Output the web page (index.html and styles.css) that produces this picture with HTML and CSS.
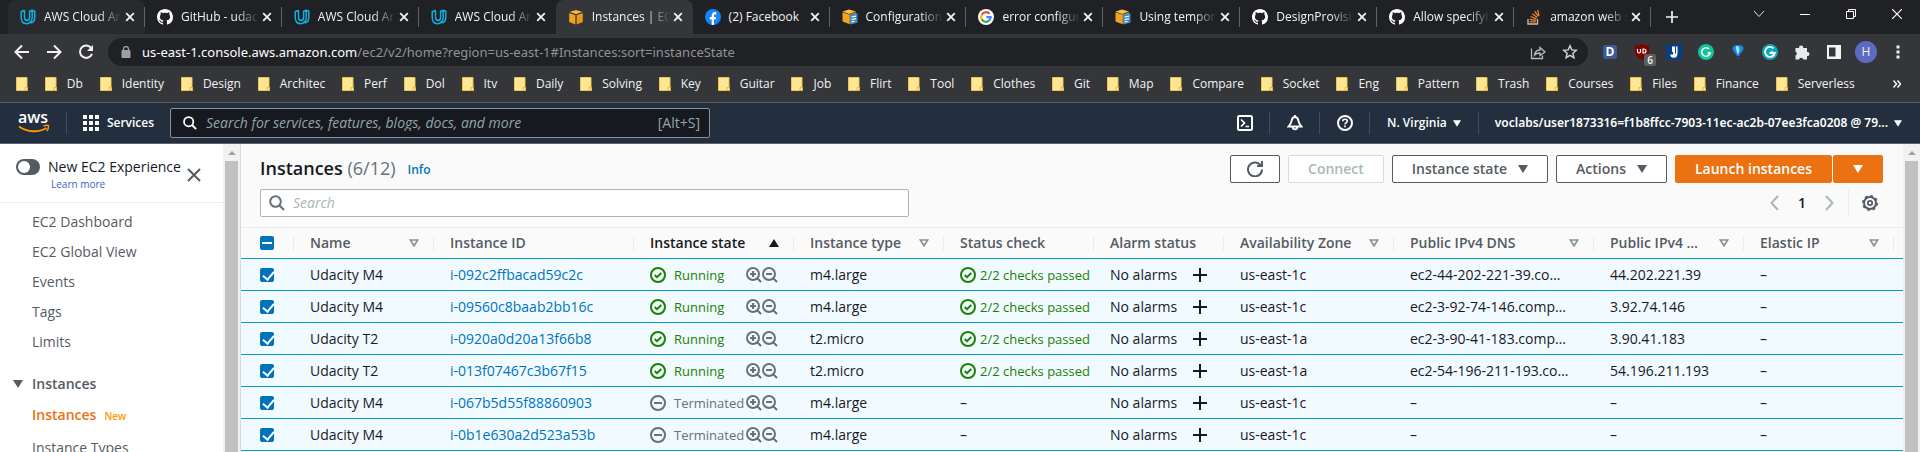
FILE: index.html
```html
<!DOCTYPE html>
<html lang="en">
<head>
<meta charset="utf-8">
<title>Instances | EC2 Management Console</title>
<link rel="stylesheet" href="styles.css">
</head>
<body>
<svg class="sprite" aria-hidden="true">
  <symbol id="udacity" viewBox="0 0 16 16"><path d="M4.500 1.200 1.200 2.700V8c0 4 2 6.700 5.300 6.700 1.700 0 3-.7 4-2M4.500 1.200V8c0 2 .8 3.500 2.600 3.500S9.600 10 9.600 8V2.200l2.600-1 2.600.9V8c0 3-1.400 5.600-4.300 6M12.200 1.400V8c0 2.800-1 4.700-2.600 5.400" fill="none" stroke="#12b0e0" stroke-width="1.500" stroke-linejoin="round"/></symbol>
  <symbol id="github" viewBox="0 0 16 16"><path fill="#fff" d="M8 0C3.580 0 0 3.580 0 8c0 3.540 2.290 6.530 5.470 7.590.4.070.55-.17.55-.38 0-.19-.01-.82-.01-1.490-2.010.37-2.530-.49-2.690-.94-.09-.23-.48-.94-.82-1.130-.28-.15-.68-.52-.01-.53.63-.01 1.080.58 1.230.82.72 1.210 1.870.87 2.330.66.070-.52.28-.87.51-1.070-1.780-.2-3.640-.89-3.640-3.950 0-.87.31-1.590.82-2.150-.08-.2-.36-1.020.08-2.120 0 0 .67-.21 2.200.82.64-.18 1.320-.27 2-.27s1.360.09 2 .27c1.530-1.040 2.200-.82 2.200-.82.44 1.100.16 1.920.08 2.120.51.56.82 1.270.82 2.150 0 3.070-1.870 3.750-3.650 3.950.29.25.54.73.54 1.480 0 1.070-.01 1.930-.01 2.200 0 .21.15.46.55.38A8.010 8.010 0 0 0 16 8c0-4.420-3.580-8-8-8z"/></symbol>
  <symbol id="cube" viewBox="0 0 16 16"><path fill="#f9b52c" d="m8 1 6.500 2L8 5.200 1.500 3z"/><path fill="#f0a31f" d="M1.200 4 7.600 6v9.500L1.200 13z"/><path fill="#e79a1a" d="M14.800 4 8.400 6v9.500l6.400-2.500z"/><path stroke="#35363a" stroke-width=".8" d="M1.200 3.600 8 5.700l6.800-2.100M8 5.700V15.600" fill="none"/></symbol>
  <symbol id="cubedoc" viewBox="0 0 16 16"><path fill="#fbc04a" d="m7 .5 7 2L7 5 .5 2.600z"/><path fill="#f0a31f" d="M.5 3.200 7 5.500V15L.5 12.400z"/><path fill="#d98a14" d="M14 3.200 7 5.500V15l7-2.600z"/><path fill="#3c8bc5" d="m8 5.500 7.500-1.300v9.500L8 15.600z"/><path stroke="#fff" stroke-width="1.200" d="m9.500 8 4.500-.8M9.500 10.500l4.500-.9M9.500 13l3-.7"/></symbol>
  <symbol id="facebook" viewBox="0 0 16 16"><circle cx="8" cy="8" r="8" fill="#1684f8"/><path fill="#fff" d="M6.700 16v-5.500H4.800V8h1.900V6.500c0-2.200 1.200-3.400 3-3.400.7 0 1.400.1 1.600.2v2.100h-1.100c-.9 0-1.200.5-1.200 1.200V8h2.200l-.4 2.500H9V16z"/></symbol>
  <symbol id="google" viewBox="0 0 16 16"><circle cx="8" cy="8" r="8" fill="#fff"/><g fill="none" stroke-width="2.200"><path stroke="#ea4335" d="M11.500 4.700A4.800 4.800 0 0 0 3.800 5.800"/><path stroke="#fbbc05" d="M3.800 5.600a4.800 4.800 0 0 0 0 4.800"/><path stroke="#34a853" d="M3.700 10.300a4.800 4.800 0 0 0 7.400 1.300"/><path stroke="#4285f4" d="M11 11.700a4.800 4.800 0 0 0 1.700-3.600H8.300"/></g></symbol>
  <symbol id="stack" viewBox="0 0 16 16"><path fill="none" stroke="#bcbbbb" stroke-width="1.400" d="M2 10v5h9.500v-5"/><path stroke="#f48024" stroke-width="1.300" d="M3.700 12.800h6.200M3.800 10.300l6.100 1M4.600 7.500l5.700 2.300M6.400 4.800l4.800 3.800M8.800 2.300l3.600 5M11.700.8l1.300 6"/></symbol>
  <symbol id="x" viewBox="0 0 10 10"><path d="m1.200 1.200 7.600 7.600M8.800 1.200 1.200 8.800" stroke="currentColor" stroke-width="1.800"/></symbol>
  <symbol id="folder" viewBox="0 0 12 14"><path d="M.5.500h10.500v9.500l.5 1v2.500H.5z" fill="#ffe694" stroke="#eec64a"/><path d="M9 10.500h2.500v3H9z" fill="#ffe694" stroke="#e5b93c"/></symbol>
  <symbol id="ok" viewBox="0 0 16 16"><circle cx="8" cy="8" r="7" fill="none" stroke="#1d8102" stroke-width="2"/><path d="m4.700 8 2.300 2.200 4.300-4.200" fill="none" stroke="#1d8102" stroke-width="2"/></symbol>
  <symbol id="stop" viewBox="0 0 16 16"><circle cx="8" cy="8" r="7" fill="none" stroke="#687078" stroke-width="2"/><path d="M4 8h8" stroke="#687078" stroke-width="2"/></symbol>
  <symbol id="zin" viewBox="0 0 16 16"><path d="M13 7A6 6 0 1 1 1 7a6 6 0 0 1 12 0zm-1.800 4.200L15 15M4 7h6M7 4v6" fill="none" stroke="#687078" stroke-width="2"/></symbol>
  <symbol id="zout" viewBox="0 0 16 16"><path d="M13 7A6 6 0 1 1 1 7a6 6 0 0 1 12 0zm-1.800 4.200L15 15M4 7h6" fill="none" stroke="#687078" stroke-width="2"/></symbol>
  <symbol id="plus" viewBox="0 0 14 14"><path d="M7 0v14M0 7h14" stroke="currentColor" stroke-width="2"/></symbol>
  <symbol id="lens" viewBox="0 0 16 16"><circle cx="6.500" cy="6.500" r="5.300" fill="none" stroke="currentColor" stroke-width="2"/><path d="m10.300 10.300 4.700 4.700" stroke="currentColor" stroke-width="2.200"/></symbol>
  <symbol id="down" viewBox="0 0 10 8"><path d="M0 0h10L5 8z" fill="currentColor"/></symbol>
  <symbol id="up" viewBox="0 0 10 8"><path d="M0 8h10L5 0z" fill="currentColor"/></symbol>
  <symbol id="sort" viewBox="0 0 10 8"><path d="M1.300 1h7.400L5 6.800z" fill="none" stroke="#879596" stroke-width="1.700"/></symbol>
</svg>

<header class="browser">
  <div class="tabstrip">
    <div class="tabs">
      <div class="tab hover"><svg class="fav"><use href="#udacity"/></svg><span>AWS Cloud Ar</span><button aria-label="Close tab"><svg><use href="#x"/></svg></button></div>
      <div class="tab"><svg class="fav"><use href="#github"/></svg><span>GitHub - udac</span><button aria-label="Close tab"><svg><use href="#x"/></svg></button></div>
      <div class="tab"><svg class="fav"><use href="#udacity"/></svg><span>AWS Cloud Ar</span><button aria-label="Close tab"><svg><use href="#x"/></svg></button></div>
      <div class="tab quiet"><svg class="fav"><use href="#udacity"/></svg><span>AWS Cloud Ar</span><button aria-label="Close tab"><svg><use href="#x"/></svg></button></div>
      <div class="tab active"><svg class="fav"><use href="#cube"/></svg><span>Instances | EC</span><button aria-label="Close tab"><svg><use href="#x"/></svg></button></div>
      <div class="tab full"><svg class="fav"><use href="#facebook"/></svg><span>(2) Facebook</span><button aria-label="Close tab"><svg><use href="#x"/></svg></button></div>
      <div class="tab"><svg class="fav"><use href="#cubedoc"/></svg><span>Configuration</span><button aria-label="Close tab"><svg><use href="#x"/></svg></button></div>
      <div class="tab"><svg class="fav"><use href="#google"/></svg><span>error configur</span><button aria-label="Close tab"><svg><use href="#x"/></svg></button></div>
      <div class="tab"><svg class="fav"><use href="#cubedoc"/></svg><span>Using tempor</span><button aria-label="Close tab"><svg><use href="#x"/></svg></button></div>
      <div class="tab"><svg class="fav"><use href="#github"/></svg><span>DesignProvisi</span><button aria-label="Close tab"><svg><use href="#x"/></svg></button></div>
      <div class="tab"><svg class="fav"><use href="#github"/></svg><span>Allow specifyi</span><button aria-label="Close tab"><svg><use href="#x"/></svg></button></div>
      <div class="tab"><svg class="fav"><use href="#stack"/></svg><span>amazon web s</span><button aria-label="Close tab"><svg><use href="#x"/></svg></button></div>
    </div>
    <button class="newtab" aria-label="New tab"><svg width="12" height="12"><use href="#plus"/></svg></button>
    <div class="winctl">
      <button aria-label="Search tabs"><svg width="12" height="12" viewBox="0 0 12 12"><path d="m1 3 5 5.500L11 3" fill="none" stroke="#ddd"/></svg></button>
      <button aria-label="Minimize"><svg width="10" height="10" viewBox="0 0 10 10"><path d="M0 5.500h10" stroke="#fff"/></svg></button>
      <button aria-label="Restore"><svg width="10" height="10" viewBox="0 0 10 10"><path d="M.5 2.500h7v7h-7zM2.500 2.500v-2h7v7h-2" fill="none" stroke="#fff"/></svg></button>
      <button aria-label="Close"><svg width="10" height="10" viewBox="0 0 10 10"><path d="m0 0 10 10M10 0 0 10" stroke="#fff" stroke-width="1.200"/></svg></button>
    </div>
  </div>

  <div class="toolbar">
    <div class="navbtns">
      <button aria-label="Back"><svg width="16" height="16" viewBox="0 0 16 16"><path d="M15 8H2.500M8 1.500 1.500 8 8 14.500" fill="none" stroke="#f1f1f1" stroke-width="2"/></svg></button>
      <button aria-label="Forward"><svg width="16" height="16" viewBox="0 0 16 16"><path d="M1 8h12.500M8 1.500 14.500 8 8 14.500" fill="none" stroke="#f1f1f1" stroke-width="2"/></svg></button>
      <button aria-label="Reload"><svg width="16" height="16" viewBox="0 0 16 16"><path d="M13.300 4.200A6.200 6.200 0 1 0 14 9.800" fill="none" stroke="#f1f1f1" stroke-width="2"/><path d="M15 1v6H9z" fill="#f1f1f1"/></svg></button>
    </div>
    <div class="omnibox">
      <svg width="10" height="12" viewBox="0 0 10 12"><path d="M1 4.500h8V11.500H1z" fill="#9aa0a6" stroke="#9aa0a6"/><path d="M2.500 5V3a2.500 2.500 0 0 1 5 0v2" fill="none" stroke="#9aa0a6" stroke-width="1.300"/></svg>
      <div class="url">us-east-1.console.aws.amazon.com<span>/ec2/v2/home?region=us-east-1#Instances:sort=instanceState</span></div>
      <button aria-label="Share"><svg width="16" height="16" viewBox="0 0 16 16"><path d="M1.500 4.500V14.500h11v-3M4.500 11c.5-3.500 2.500-5 5.500-5V3.500L15 8l-5 3.500V9c-2.500 0-4.300.6-5.500 2z" fill="none" stroke="#b8bbc0" stroke-width="1.300"/></svg></button>
      <button aria-label="Bookmark"><svg width="16" height="16" viewBox="0 0 16 16"><path d="m8 1.800 1.800 4.100 4.500.4-3.400 3 1 4.400L8 11.400l-3.900 2.300 1-4.400-3.400-3 4.500-.4z" fill="none" stroke="#d0d2d5" stroke-width="1.500"/></svg></button>
    </div>
    <div class="exts">
      <button aria-label="D extension"><span class="ext-d">D</span></button>
      <button aria-label="uBlock" class="ublock"><svg width="16" height="16" viewBox="0 0 16 16"><path d="M8 0c2 1.300 4.500 1.500 7 1.500v6c0 4-3 6.500-7 8.500-4-2-7-4.500-7-8.500v-6C3.500 1.500 6 1.300 8 0z" fill="#800000"/><path d="M3.500 5v2.500a1.500 1.500 0 0 0 3 0V5M9 5v4h1a2 2 0 0 0 0-4z" fill="none" stroke="#fff" stroke-width="1.200"/></svg><span class="count">6</span></button>
      <button aria-label="J extension"><svg width="16" height="16" viewBox="0 0 16 16"><path d="M0 0h16v16H0z" fill="#083f83"/><path d="M6 2.500h5.500V9c0 3.500-1.600 4.800-3.600 4.800-2.400 0-3.700-1.300-3.700-3.300h3V8H6z" fill="#fff"/><path d="M9.500 2.500v7" stroke="#083f83"/></svg></button>
      <button aria-label="Grammarly"><svg width="16" height="16" viewBox="0 0 16 16"><circle cx="8" cy="8" r="8" fill="#15c39a"/><path d="M11 5a4.300 4.300 0 1 0 1.200 4H9.500" fill="none" stroke="#fff" stroke-width="1.500"/></svg></button>
      <button aria-label="Balloon extension"><svg width="14" height="16" viewBox="0 0 14 16"><path d="M7 1c3.500 0 5.500 1.300 5.500 3.500S9 9.500 8.200 12H5.800C5 9.500 1.500 6.700 1.500 4.500S3.500 1 7 1z" fill="#128ee8"/><path d="M5.500 2C6.500 1.500 8.500 2.500 8.500 5s-.9 4-1.600 5.500C6 9 4 3.500 5.500 2z" fill="#a5e1ff"/><path d="M6 13h2v2H6z" fill="#1550a0"/></svg></button>
      <button aria-label="G extension"><svg width="16" height="16" viewBox="0 0 16 16"><circle cx="8" cy="8" r="8" fill="#10a7bb"/><path d="M11.500 4.300a5 5 0 1 0 1.400 4.700H7.500" fill="none" stroke="#fff" stroke-width="1.800"/><path d="m9 6.500 4 2.500-3 1.500" fill="#fff"/></svg></button>
      <button aria-label="Extensions"><svg width="16" height="16" viewBox="0 0 16 16"><path d="M1.500 4h3.700a2 2 0 1 1 3.900 0H13v4a2 2 0 1 1 0 3.900v3.600H9.300a2.200 2.200 0 0 0-4.300 0H1.500v-4a2 2 0 0 0 0-3.800z" fill="#e8eaed"/></svg></button>
      <button aria-label="Side panel"><svg width="14" height="14" viewBox="0 0 14 14"><path d="M0 0h14v14H0zM2 2.500v9h6.500v-9z" fill="#f1f3f4" fill-rule="evenodd"/></svg></button>
      <button aria-label="Profile"><span class="avatar">H</span></button>
      <button aria-label="Menu"><svg width="4" height="14" viewBox="0 0 4 14"><path d="M.5.500h3v3h-3zM.5 5.500h3v3h-3zM.5 10.500h3v3h-3z" fill="#f1f1f1"/></svg></button>
    </div>
  </div>

  <nav class="bookmarks">
    <div class="marks">
      <a href="#" aria-label="Folder"><svg><use href="#folder"/></svg></a>
      <a href="#"><svg><use href="#folder"/></svg>Db</a>
      <a href="#"><svg><use href="#folder"/></svg>Identity</a>
      <a href="#"><svg><use href="#folder"/></svg>Design</a>
      <a href="#"><svg><use href="#folder"/></svg>Architec</a>
      <a href="#"><svg><use href="#folder"/></svg>Perf</a>
      <a href="#"><svg><use href="#folder"/></svg>Dol</a>
      <a href="#"><svg><use href="#folder"/></svg>Itv</a>
      <a href="#"><svg><use href="#folder"/></svg>Daily</a>
      <a href="#"><svg><use href="#folder"/></svg>Solving</a>
      <a href="#"><svg><use href="#folder"/></svg>Key</a>
      <a href="#"><svg><use href="#folder"/></svg>Guitar</a>
      <a href="#"><svg><use href="#folder"/></svg>Job</a>
      <a href="#"><svg><use href="#folder"/></svg>Flirt</a>
      <a href="#"><svg><use href="#folder"/></svg>Tool</a>
      <a href="#"><svg><use href="#folder"/></svg>Clothes</a>
      <a href="#"><svg><use href="#folder"/></svg>Git</a>
      <a href="#"><svg><use href="#folder"/></svg>Map</a>
      <a href="#"><svg><use href="#folder"/></svg>Compare</a>
      <a href="#"><svg><use href="#folder"/></svg>Socket</a>
      <a href="#"><svg><use href="#folder"/></svg>Eng</a>
      <a href="#"><svg><use href="#folder"/></svg>Pattern</a>
      <a href="#"><svg><use href="#folder"/></svg>Trash</a>
      <a href="#"><svg><use href="#folder"/></svg>Courses</a>
      <a href="#"><svg><use href="#folder"/></svg>Files</a>
      <a href="#"><svg><use href="#folder"/></svg>Finance</a>
      <a href="#"><svg><use href="#folder"/></svg>Serverless</a>
    </div>
    <button aria-label="More bookmarks"><svg width="8" height="8" viewBox="0 0 8 8"><path d="m.5.500 3 3.500-3 3.500M4.500.500l3 3.500-3 3.500" fill="none" stroke="#fff" stroke-width="1.500"/></svg></button>
  </nav>
</header>

<header class="awsnav">
  <a class="logo" href="#" aria-label="AWS home"><svg width="32" height="22" viewBox="0 0 32 22"><text x="0" y="11" class="logotext">aws</text><path d="M1 14.500c8.500 6 19.500 6.300 27.500 1.500" fill="none" stroke="#f90" stroke-width="2"/><path d="M25.500 14c2-.8 4-.9 5-.4.300 1.700-.4 3.800-1.800 5.400" fill="none" stroke="#f90" stroke-width="1.400"/></svg></a>
  <button class="services"><svg width="16" height="16" viewBox="0 0 16 16"><path d="M0 0h4v4H0zM6 0h4v4H6zM12 0h4v4h-4zM0 6h4v4H0zM6 6h4v4H6zM12 6h4v4h-4zM0 12h4v4H0zM6 12h4v4H6zM12 12h4v4h-4z" fill="#fff"/></svg>Services</button>
  <label class="navsearch"><svg width="14" height="14"><use href="#lens"/></svg><input type="text" aria-label="Search services" placeholder="Search for services, features, blogs, docs, and more"><span>[Alt+S]</span></label>
  <div class="navright">
    <button aria-label="CloudShell"><svg width="16" height="16" viewBox="0 0 16 16"><rect x="1" y="1" width="14" height="14" rx="1.500" fill="none" stroke="#fff" stroke-width="2"/><path d="m4 4.500 3.500 3.500L4 11.500M8.500 11.500H12" fill="none" stroke="#fff" stroke-width="1.700"/></svg></button>
    <button aria-label="Notifications"><svg width="16" height="16" viewBox="0 0 16 16"><path d="M8 2C6 2 5 3.500 4.700 5.500 4.300 8 3.500 9.200 1.500 11.500h13C12.500 9.200 11.700 8 11.300 5.500 11 3.500 10 2 8 2zM8 0v2M5.700 12a2.300 2.300 0 0 0 4.600 0" fill="none" stroke="#fff" stroke-width="1.800"/></svg></button>
    <button aria-label="Help"><svg width="16" height="16" viewBox="0 0 16 16"><circle cx="8" cy="8" r="7" fill="none" stroke="#fff" stroke-width="2"/><path d="M5.700 6.300C5.700 4.900 6.700 4.200 8 4.200s2.300.8 2.300 2C10.300 7.600 8 7.700 8 9.500M8 10.500v1.800" fill="none" stroke="#fff" stroke-width="1.600"/></svg></button>
    <button class="region">N. Virginia<svg width="8" height="7"><use href="#down"/></svg></button>
    <button class="user">voclabs/user1873316=f1b8ffcc-7903-11ec-ac2b-07ee3fca0208 @ 79...<svg width="8" height="7"><use href="#down"/></svg></button>
  </div>
</header>

<div class="app">
  <aside class="side">
    <div class="sidebody">
      <div class="exp">
        <input type="checkbox" id="newexp" class="switch">
        <div class="exptext"><label for="newexp">New EC2 Experience</label><a href="#">Learn more</a></div>
        <button aria-label="Close panel"><svg width="14" height="14" viewBox="0 0 14 14"><path d="m1 1 12 12M13 1 1 13" stroke="#545b64" stroke-width="2"/></svg></button>
      </div>
      <nav class="links">
        <a href="#">EC2 Dashboard</a>
        <a href="#">EC2 Global View</a>
        <a href="#">Events</a>
        <a href="#">Tags</a>
        <a href="#">Limits</a>
      </nav>
      <button class="group"><svg width="10" height="8"><use href="#down"/></svg>Instances</button>
      <nav class="links sub">
        <a href="#" class="current">Instances<small>New</small></a>
        <a href="#">Instance Types</a>
      </nav>
    </div>
    <div class="scroll"><svg width="8" height="4" viewBox="0 0 10 8" preserveAspectRatio="none"><path d="M0 8h10L5 0z" fill="#a0a0a0"/></svg><div class="thumb"></div></div>
  </aside>

  <main>
    <div class="head">
      <h1>Instances <span>(6/12)</span></h1><a class="info" href="#">Info</a>
      <div class="actions">
        <button class="btn refresh" aria-label="Refresh"><svg width="16" height="16" viewBox="0 0 16 16"><path d="M13.800 4.500A7 7 0 1 0 15 8.500" fill="none" stroke="#545b64" stroke-width="2"/><path d="M15 0v5H10" fill="none" stroke="#545b64" stroke-width="2"/></svg></button>
        <button class="btn" disabled>Connect</button>
        <button class="btn">Instance state<svg width="10" height="8"><use href="#down"/></svg></button>
        <button class="btn">Actions<svg width="10" height="8"><use href="#down"/></svg></button>
        <div class="split"><button class="btn primary">Launch instances</button><button class="btn primary arrow" aria-label="More launch options"><svg width="10" height="8"><use href="#down"/></svg></button></div>
      </div>
    </div>
    <div class="filter">
      <label class="find"><svg width="16" height="16"><use href="#lens"/></svg><input type="text" aria-label="Search instances" placeholder="Search"></label>
      <div class="pager">
        <button aria-label="Previous page"><svg width="9" height="16" viewBox="0 0 9 16"><path d="M8 1 1.500 8 8 15" fill="none" stroke="#aab7b8" stroke-width="2"/></svg></button>
        <button class="page">1</button>
        <button aria-label="Next page"><svg width="9" height="16" viewBox="0 0 9 16"><path d="M1 1l6.500 7L1 15" fill="none" stroke="#aab7b8" stroke-width="2"/></svg></button>
        <button class="gear" aria-label="Preferences"><svg width="16" height="16" viewBox="0 0 16 16"><circle cx="8" cy="8" r="6" fill="none" stroke="#545b64" stroke-width="2"/><circle cx="8" cy="8" r="7.200" fill="none" stroke="#545b64" stroke-width="1.600" stroke-dasharray="2.830 2.830"/><circle cx="8" cy="8" r="2.200" fill="none" stroke="#545b64" stroke-width="1.700"/></svg></button>
      </div>
    </div>
    <table>
      <colgroup><col class="c-check"><col class="c-140"><col class="c-200"><col class="c-160"><col class="c-150"><col class="c-150"><col class="c-130"><col class="c-170"><col class="c-200"><col class="c-150"><col class="c-150"><col></colgroup>
      <thead><tr>
        <th><input type="checkbox" class="box mixed" aria-label="Select all"></th>
        <th><div>Name<svg width="10" height="8"><use href="#sort"/></svg></div></th>
        <th><div>Instance ID</div></th>
        <th class="sorted"><div>Instance state<svg width="10" height="8"><use href="#up"/></svg></div></th>
        <th><div>Instance type<svg width="10" height="8"><use href="#sort"/></svg></div></th>
        <th><div>Status check</div></th>
        <th><div>Alarm status</div></th>
        <th><div>Availability Zone<svg width="10" height="8"><use href="#sort"/></svg></div></th>
        <th><div>Public IPv4 DNS<svg width="10" height="8"><use href="#sort"/></svg></div></th>
        <th><div>Public IPv4 …<svg width="10" height="8"><use href="#sort"/></svg></div></th>
        <th><div>Elastic IP<svg width="10" height="8"><use href="#sort"/></svg></div></th>
        <th></th>
      </tr></thead>
      <tbody>
        <tr><td><input type="checkbox" class="box" aria-label="Select row" checked></td><td>Udacity M4</td><td><a href="#">i-092c2ffbacad59c2c</a></td><td><div class="state run"><svg><use href="#ok"/></svg><span>Running</span><svg><use href="#zin"/></svg><svg><use href="#zout"/></svg></div></td><td>m4.large</td><td><div class="check"><svg><use href="#ok"/></svg>2/2 checks passed</div></td><td><div class="alarm">No alarms<svg><use href="#plus"/></svg></div></td><td>us-east-1c</td><td>ec2-44-202-221-39.co…</td><td>44.202.221.39</td><td>–</td><td></td></tr>
        <tr><td><input type="checkbox" class="box" aria-label="Select row" checked></td><td>Udacity M4</td><td><a href="#">i-09560c8baab2bb16c</a></td><td><div class="state run"><svg><use href="#ok"/></svg><span>Running</span><svg><use href="#zin"/></svg><svg><use href="#zout"/></svg></div></td><td>m4.large</td><td><div class="check"><svg><use href="#ok"/></svg>2/2 checks passed</div></td><td><div class="alarm">No alarms<svg><use href="#plus"/></svg></div></td><td>us-east-1c</td><td>ec2-3-92-74-146.comp…</td><td>3.92.74.146</td><td>–</td><td></td></tr>
        <tr><td><input type="checkbox" class="box" aria-label="Select row" checked></td><td>Udacity T2</td><td><a href="#">i-0920a0d20a13f66b8</a></td><td><div class="state run"><svg><use href="#ok"/></svg><span>Running</span><svg><use href="#zin"/></svg><svg><use href="#zout"/></svg></div></td><td>t2.micro</td><td><div class="check"><svg><use href="#ok"/></svg>2/2 checks passed</div></td><td><div class="alarm">No alarms<svg><use href="#plus"/></svg></div></td><td>us-east-1a</td><td>ec2-3-90-41-183.comp…</td><td>3.90.41.183</td><td>–</td><td></td></tr>
        <tr><td><input type="checkbox" class="box" aria-label="Select row" checked></td><td>Udacity T2</td><td><a href="#">i-013f07467c3b67f15</a></td><td><div class="state run"><svg><use href="#ok"/></svg><span>Running</span><svg><use href="#zin"/></svg><svg><use href="#zout"/></svg></div></td><td>t2.micro</td><td><div class="check"><svg><use href="#ok"/></svg>2/2 checks passed</div></td><td><div class="alarm">No alarms<svg><use href="#plus"/></svg></div></td><td>us-east-1a</td><td>ec2-54-196-211-193.co…</td><td>54.196.211.193</td><td>–</td><td></td></tr>
        <tr><td><input type="checkbox" class="box" aria-label="Select row" checked></td><td>Udacity M4</td><td><a href="#">i-067b5d55f88860903</a></td><td><div class="state"><svg><use href="#stop"/></svg><span>Terminated</span><svg><use href="#zin"/></svg><svg><use href="#zout"/></svg></div></td><td>m4.large</td><td>–</td><td><div class="alarm">No alarms<svg><use href="#plus"/></svg></div></td><td>us-east-1c</td><td>–</td><td>–</td><td>–</td><td></td></tr>
        <tr><td><input type="checkbox" class="box" aria-label="Select row" checked></td><td>Udacity M4</td><td><a href="#">i-0b1e630a2d523a53b</a></td><td><div class="state"><svg><use href="#stop"/></svg><span>Terminated</span><svg><use href="#zin"/></svg><svg><use href="#zout"/></svg></div></td><td>m4.large</td><td>–</td><td><div class="alarm">No alarms<svg><use href="#plus"/></svg></div></td><td>us-east-1c</td><td>–</td><td>–</td><td>–</td><td></td></tr>
      </tbody>
    </table>
  </main>
  <div class="scroll"><svg width="8" height="4" viewBox="0 0 10 8" preserveAspectRatio="none"><path d="M0 8h10L5 0z" fill="#a0a0a0"/></svg><div class="thumb"></div></div>
</div>
</body>
</html>
```

FILE: styles.css
```css
* { box-sizing: border-box; }
body {
  margin: 0;
  height: 100vh;
  display: flex;
  flex-direction: column;
  overflow: hidden;
  background: #fff;
  color: #16191f;
  font: 14px/22px "Open Sans", "Noto Sans", sans-serif;
}
button, input { font: inherit; color: inherit; }
button { border: 0; padding: 0; background: none; display: inline-flex; align-items: center; justify-content: center; }
a { text-decoration: none; color: inherit; }
svg { flex: none; display: block; }
.sprite { position: absolute; width: 0; height: 0; }

/* browser frame */
.browser { flex: none; background: #35363a; color: #f1f3f4; font-size: 12px; line-height: 16px; border-bottom: 1px solid #5b5c60; }
.tabstrip { display: flex; height: 34px; background: #202124; padding-left: 8px; }
.tabs { display: flex; flex: 0 1 1643px; min-width: 0; }
.tab { flex: 1 1 0; min-width: 0; display: flex; align-items: center; padding: 0 7px 0 12px; position: relative; }
.tab::after { content: ""; position: absolute; right: 0; top: 7px; width: 1px; height: 20px; background: #5f6368; }
.tab.quiet::after, .tab.active::after { display: none; }
.tab.hover { background: #292a2d; border-radius: 8px 8px 0 0; }
.tab.active { background: #35363a; border-radius: 8px 8px 0 0; }
.fav { width: 16px; height: 16px; margin-right: 8px; }
.tab span { flex: 1; min-width: 0; white-space: nowrap; -webkit-mask-image: linear-gradient(90deg, #000 70%, transparent); mask-image: linear-gradient(90deg, #000 70%, transparent); }
.tab.full span { -webkit-mask-image: none; mask-image: none; }
.tab button { width: 16px; height: 16px; }
.tab button svg { width: 10px; height: 10px; }
.newtab { width: 42px; }
.winctl { display: flex; margin-left: auto; height: 28px; }
.winctl button { width: 46px; }
.toolbar { display: flex; align-items: center; height: 36px; padding: 0 6px; }
.navbtns { display: flex; }
.navbtns button, .exts button { width: 32px; height: 32px; }
.omnibox { flex: 1; display: flex; align-items: center; height: 28px; margin-left: 6px; padding: 0 2px 0 13px; border-radius: 14px; background: #202124; }
.omnibox button { width: 32px; height: 28px; }
.url { flex: 1; margin-left: 11px; font: 13px/20px "Noto Sans", "Open Sans", sans-serif; color: #fff; white-space: nowrap; }
.url span { color: #8f9399; }
.exts { display: flex; margin-left: 6px; }
.ext-d { width: 14px; height: 14px; border-radius: 2px; background: #3b5998; color: #fff; font-weight: 700; line-height: 14px; }
.ublock { position: relative; }
.count { position: absolute; left: 18px; top: 18px; width: 12px; height: 12px; border-radius: 2px; background: #5e5e5e; font-size: 10px; line-height: 12px; font-weight: 600; }
.avatar { width: 22px; height: 22px; border-radius: 50%; background: #5c6bc0; line-height: 22px; }
.bookmarks { display: flex; align-items: center; height: 32px; padding: 0 19px 4px 16px; }
.marks { flex: 1; display: flex; justify-content: space-between; margin-right: 38px; }
.marks a { display: flex; align-items: center; gap: 10px; }
.marks svg { width: 12px; height: 14px; }

/* console navigation */
.awsnav { flex: none; display: flex; align-items: center; height: 41px; background: #232f3e; color: #fff; font: 600 12px/16px "Noto Sans", "Open Sans", sans-serif; border-bottom: 1px solid #5a6472; }
.logo { width: 67px; padding-left: 18px; border-right: 1px solid #414d5c; }
.logo svg { overflow: visible; }
.logotext { font: 600 16px "Open Sans", sans-serif; fill: #fff; }
.services { gap: 8px; width: 103px; font-family: "Open Sans", sans-serif; }
.navsearch { flex: 0 1 540px; min-width: 0; display: flex; align-items: center; height: 30px; padding: 0 9px 0 12px; background: #161920; border: 1px solid #879596; border-radius: 2px; font-family: "Open Sans", sans-serif; }
.navsearch input { flex: 1; min-width: 0; margin-left: 9px; padding: 0; border: 0; background: none; font-size: 14px; font-weight: 400; }
.navsearch input::placeholder { color: #95a5a6; opacity: 1; font-style: italic; }
.navsearch span { font-size: 14px; font-weight: 400; color: #95a5a6; }
.navright { display: flex; margin-left: auto; white-space: nowrap; }
.navright button { height: 22px; width: 50px; border-right: 1px solid #414d5c; }
.navright .region { width: auto; gap: 6px; padding: 0 17px; font-family: "Open Sans", sans-serif; }
.navright .user { width: auto; gap: 6px; border: 0; padding: 0 18px 0 16px; }

/* page body */
.app { flex: 1; min-height: 0; display: flex; }
.side { flex: none; width: 240px; display: flex; overflow: hidden; }
.sidebody { flex: 1; }
.scroll { flex: none; width: 17px; display: flex; flex-direction: column; align-items: center; padding-top: 7px; background: #f1f1f1; }
.thumb { flex: 1; width: 13px; margin-top: 6px; background: #c1c1c1; }
.exp { display: flex; height: 59px; padding: 12px 22px 0 16px; border-bottom: 1px solid #eaeded; }
.switch { appearance: none; flex: none; width: 24px; height: 16px; margin: 3px 8px 0 0; border-radius: 8px; background: #545b64; }
.switch::before { content: ""; display: block; width: 12px; height: 12px; margin: 2px; border-radius: 50%; background: #fff; }
.exptext { flex: 1; min-width: 0; white-space: nowrap; }
.exptext label { display: block; }
.exptext a { display: block; margin-left: 3px; font-size: 10px; line-height: 12px; color: #3b62c4; }
.exp button { height: 38px; }
.links { display: flex; flex-direction: column; gap: 8px; padding: 8px 0 0 32px; color: #545b64; white-space: nowrap; }
.group { margin: 20px 0 0 13px; gap: 9px; font-weight: 600; color: #545b64; }
.links.sub { padding-top: 9px; gap: 10px; }
.current { font-weight: 600; color: #ec7211; }
.current small { margin-left: 8px; font-size: 10px; color: #ff9900; }

main { flex: 1; min-width: 0; background: #fafafa; border-left: 1px solid #d5dbdb; overflow: hidden; }
.head { display: flex; align-items: center; height: 45px; padding: 4px 20px 0 19px; }
h1 { margin: 0 0 2px; font-size: 18px; line-height: 22px; font-weight: 600; }
h1 span { font-weight: 400; color: #687078; }
.info { margin: 2px 0 0 12px; font-size: 12px; line-height: 16px; font-weight: 600; color: #0073bb; }
.actions { display: flex; gap: 8px; margin-left: auto; }
.btn { height: 28px; padding: 0 19px; gap: 11px; background: #fff; border: 1px solid #545b64; border-radius: 2px; color: #545b64; font-weight: 600; white-space: nowrap; }
.btn:disabled { border-color: #d5dbdb; color: #aab7b8; }
.refresh { width: 50px; padding: 0; }
.split { display: flex; gap: 1px; }
.primary { background: #ec7211; border-color: #ec7211; color: #fff; }
.arrow { width: 50px; padding: 0; }
.filter { display: flex; justify-content: space-between; padding: 0 20px 10px 19px; }
.find { flex: 0 1 40%; display: flex; align-items: center; height: 28px; padding-left: 8px; background: #fff; border: 1px solid #aab7b8; border-radius: 2px; color: #687078; }
.find input { flex: 1; min-width: 0; margin-left: 8px; padding: 0; border: 0; background: none; color: #16191f; }
.find input::placeholder { color: #aab7b8; opacity: 1; font-style: italic; }
.pager { display: flex; align-items: center; }
.page { width: 46px; font-weight: 600; }
.gear { height: 28px; margin-left: 14px; padding: 0 5px 0 13px; border-left: 1px solid #eaeded; }

table { width: 100%; table-layout: fixed; border-collapse: collapse; border-top: 1px solid #eaeded; }
.c-check { width: 53px; }
.c-130 { width: 130px; }
.c-140 { width: 140px; }
.c-150 { width: 150px; }
.c-160 { width: 160px; }
.c-170 { width: 170px; }
.c-200 { width: 200px; }
th, td { height: 32px; padding: 0 0 0 16px; text-align: left; white-space: nowrap; overflow: hidden; }
th { height: 31px; }
th:first-child, td:first-child { padding-left: 19px; }
th { font-weight: 600; color: #545b64; background: linear-gradient(#eaeded, #eaeded) right center / 1px 15px no-repeat; }
th:last-child { background: none; }
th div { display: flex; align-items: center; justify-content: space-between; padding-right: 15px; }
th.sorted { color: #16191f; }
tbody tr { background: #f1faff; border-top: 1px solid #00a1c9; border-bottom: 1px solid #00a1c9; }
td a { color: #0073bb; }
.box { appearance: none; display: block; width: 14px; height: 14px; margin: 0; border-radius: 2px; background: #0073bb; }
.box::before { content: ""; display: block; width: 5px; height: 9px; margin: 0 0 0 5px; border: solid #fff; border-width: 0 2px 2px 0; transform: translateY(1px) rotate(40deg); }
.box.mixed::before { width: 10px; height: 2px; margin: 0 2px; border: 0; background: #fff; transform: translateY(6px); }
.state { display: flex; align-items: center; font-size: 13px; color: #687078; }
.state svg, .check svg { width: 16px; height: 16px; }
.state span { width: 72px; margin-left: 8px; }
.state.run, .check { color: #1d8102; }
.check { display: flex; align-items: center; gap: 4px; font-size: 13px; }
.alarm { display: flex; align-items: center; justify-content: space-between; padding-right: 17px; }
.alarm svg { width: 14px; height: 14px; }
```
